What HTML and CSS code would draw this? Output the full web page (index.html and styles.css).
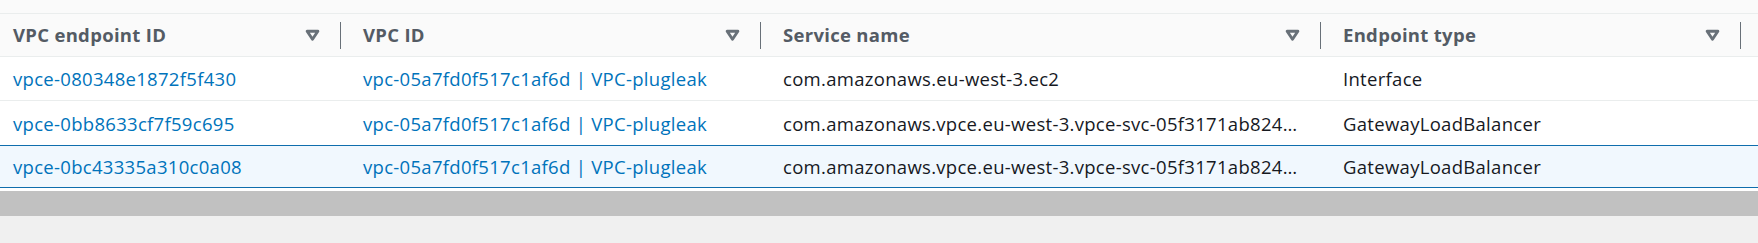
FILE: index.html
```html
<!DOCTYPE html>
<html lang="en">
<head>
<meta charset="utf-8">
<title>VPC endpoints</title>
<link rel="stylesheet" href="styles.css">
</head>
<body>
<div class="table-wrap">
  <div class="top-band"></div>
  <table class="endpoints">
    <colgroup>
      <col class="c1"><col class="c2"><col class="c3"><col class="c4"><col class="c5">
    </colgroup>
    <thead>
      <tr>
        <th class="first"><div class="th-inner"><span class="th-label">VPC endpoint ID</span><svg class="sort" viewBox="0 0 14 12"><path d="M2 2h10L7 9.5z"/></svg><span class="divider"></span></div></th>
        <th><div class="th-inner"><span class="th-label">VPC ID</span><svg class="sort" viewBox="0 0 14 12"><path d="M2 2h10L7 9.5z"/></svg><span class="divider"></span></div></th>
        <th><div class="th-inner"><span class="th-label">Service name</span><svg class="sort" viewBox="0 0 14 12"><path d="M2 2h10L7 9.5z"/></svg><span class="divider"></span></div></th>
        <th><div class="th-inner"><span class="th-label">Endpoint type</span><svg class="sort" viewBox="0 0 14 12"><path d="M2 2h10L7 9.5z"/></svg><span class="divider"></span></div></th>
        <th class="filler"></th>
      </tr>
    </thead>
    <tbody>
      <tr class="row">
        <td class="first"><a class="link" href="#">vpce-080348e1872f5f430</a></td>
        <td><a class="link" href="#">vpc-05a7fd0f517c1af6d | VPC-plugleak</a></td>
        <td><span class="ellipsis">com.amazonaws.eu-west-3.ec2</span></td>
        <td>Interface</td>
        <td class="filler"></td>
      </tr>
      <tr class="row before-selected">
        <td class="first"><a class="link" href="#">vpce-0bb8633cf7f59c695</a></td>
        <td><a class="link" href="#">vpc-05a7fd0f517c1af6d | VPC-plugleak</a></td>
        <td><span class="ellipsis">com.amazonaws.vpce.eu-west-3.vpce-svc-05f3171ab8244b1a2</span></td>
        <td>GatewayLoadBalancer</td>
        <td class="filler"></td>
      </tr>
      <tr class="row selected">
        <td class="first"><a class="link" href="#">vpce-0bc43335a310c0a08</a></td>
        <td><a class="link" href="#">vpc-05a7fd0f517c1af6d | VPC-plugleak</a></td>
        <td><span class="ellipsis">com.amazonaws.vpce.eu-west-3.vpce-svc-05f3171ab8244b1a2</span></td>
        <td>GatewayLoadBalancer</td>
        <td class="filler"></td>
      </tr>
    </tbody>
  </table>
  <div class="bottom-gap"></div>
</div>
<div class="hscroll"></div>
</body>
</html>
```

FILE: styles.css
```css
html, body {
  margin: 0;
  padding: 0;
}
body {
  background: #f0f0f0;
  font-family: "Open Sans", "Noto Sans", Arial, sans-serif;
  font-size: 18.5px;
  letter-spacing: 0.3px;
  color: #16191f;
  width: 1758px;
  overflow: hidden;
}
.table-wrap {
  background: #ffffff;
}
.top-band {
  height: 13px;
  background: #fafafa;
  border-bottom: 1px solid #eaeded;
}
.endpoints {
  width: 1758px;
  table-layout: fixed;
  border-collapse: separate;
  border-spacing: 0;
}
.c1 { width: 341px; }
.c2 { width: 420px; }
.c3 { width: 560px; }
.c4 { width: 420px; }
.c5 { width: 17px; }

.endpoints th {
  background: #fafafa;
  height: 42px;
  padding: 0 0 0 22px;
  border-bottom: 1px solid #eaeded;
  text-align: left;
  font-weight: 700;
  color: #545b64;
}
.endpoints th.first { padding-left: 13px; }
.endpoints th.filler { padding: 0; }
.th-inner {
  display: flex;
  align-items: center;
  height: 42px;
}
.th-label {
  flex: 1;
  white-space: nowrap;
  margin-top: -2px;
}
.sort {
  width: 15px;
  height: 13px;
  margin-right: 20px;
  margin-top: 1px;
  fill: none;
  stroke: #687078;
  stroke-width: 2.7;
  stroke-linejoin: round;
}
.divider {
  width: 1px;
  height: 27px;
  background: #687078;
}
.endpoints td {
  height: 43px;
  padding: 0 20px 0 22px;
  border-bottom: 1px solid #eaeded;
  white-space: nowrap;
  overflow: hidden;
  text-overflow: ellipsis;
  vertical-align: middle;
}
.endpoints td.first { padding-left: 13px; }
.endpoints td.filler { padding: 0; }
.row.before-selected td {
  height: 44px;
  border-bottom-color: #0f6ead;
}
.row.selected td {
  height: 41px;
  background: #f1f8fe;
  border-bottom-color: #0f6ead;
}
.ellipsis {
  display: block;
  overflow: hidden;
  text-overflow: ellipsis;
  white-space: nowrap;
}
.link {
  color: #0073bb;
  text-decoration: none;
}
.bottom-gap {
  height: 3px;
}
.hscroll {
  height: 25px;
  background: #c1c1c1;
}
```
